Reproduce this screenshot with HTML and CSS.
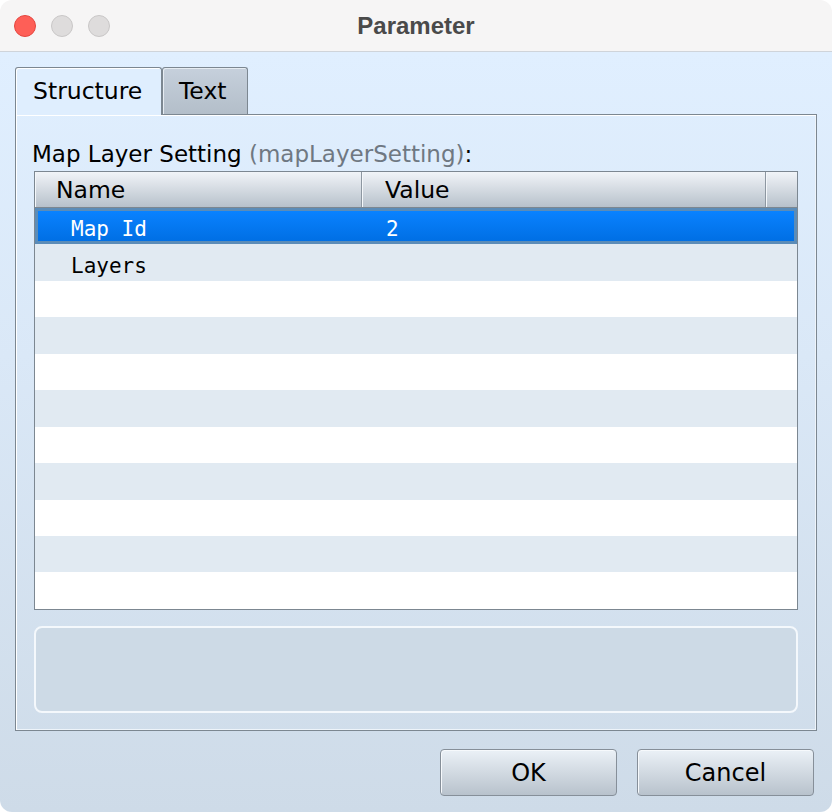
FILE: index.html
```html
<!DOCTYPE html>
<html>
<head>
<meta charset="utf-8">
<link rel="stylesheet" href="styles.css">
</head>
<body>
<div class="window">
  <div class="titlebar">
    <div class="lights">
      <span class="light red"></span>
      <span class="light gray"></span>
      <span class="light gray"></span>
    </div>
    <div class="title">Parameter</div>
  </div>
  <div class="content">
    <div class="tabs">
      <div class="tab active">Structure</div>
      <div class="tab">Text</div>
    </div>
    <div class="pane">
      <div class="label">Map Layer Setting <span class="key">(mapLayerSetting)</span>:</div>
      <div class="table">
        <div class="thead">
          <div class="th col-name">Name</div>
          <div class="th col-value">Value</div>
          <div class="th col-end"></div>
        </div>
        <div class="tbody">
          <div class="row selected"><div class="cell col-name">Map Id</div><div class="cell col-value">2</div></div>
          <div class="row alt"><div class="cell col-name">Layers</div><div class="cell col-value"></div></div>
          <div class="row"></div>
          <div class="row alt"></div>
          <div class="row"></div>
          <div class="row alt"></div>
          <div class="row"></div>
          <div class="row alt"></div>
          <div class="row"></div>
          <div class="row alt"></div>
          <div class="row"></div>
        </div>
      </div>
      <div class="desc"></div>
    </div>
    <div class="buttons">
      <button class="btn">OK</button>
      <button class="btn">Cancel</button>
    </div>
  </div>
</div>
</body>
</html>
```

FILE: styles.css
```css
html, body {
  margin: 0;
  padding: 0;
  background: #ffffff;
}
.window {
  width: 832px;
  height: 812px;
  border-radius: 12px;
  overflow: hidden;
  display: flex;
  flex-direction: column;
  font-family: "DejaVu Sans", sans-serif;
  color: #000;
}
.titlebar {
  height: 51px;
  flex: none;
  background: #f6f5f5;
  border-bottom: 1px solid #cfd4da;
  display: flex;
  align-items: center;
  position: relative;
}
.lights {
  display: flex;
  gap: 15px;
  padding-left: 14px;
}
.light {
  width: 22px;
  height: 22px;
  border-radius: 50%;
  box-sizing: border-box;
}
.light.red {
  background: #fe5f57;
  border: 1px solid #e5463f;
}
.light.gray {
  background: #dedcdc;
  border: 1px solid #c9c7c7;
}
.title {
  position: absolute;
  left: 0;
  right: 0;
  text-align: center;
  font-family: "Liberation Sans", "DejaVu Sans", sans-serif;
  font-weight: bold;
  font-size: 24px;
  color: #4a4a4a;
  pointer-events: none;
}
.content {
  flex: 1;
  background: linear-gradient(to bottom, #e0efff 0%, #dae8f7 40%, #cedbe8 100%);
  padding: 15px 15px 0 15px;
  display: flex;
  flex-direction: column;
}
.tabs {
  display: flex;
  align-items: flex-end;
  height: 48px;
  position: relative;
  z-index: 2;
  margin-bottom: -1px;
}
.tab {
  box-sizing: border-box;
  height: 47px;
  font-size: 23.5px;
  line-height: 47px;
  border: 1px solid #7c8791;
  border-bottom: none;
  border-radius: 3px 3px 0 0;
  background: linear-gradient(to bottom, #c6d0dc, #b3bec9);
  box-shadow: inset 1px 1px 0 #e6ecf2;
}
.tab.active {
  height: 48px;
  width: 147px;
  padding: 0 0 0 17px;
  background: #dfeefe;
  box-shadow: inset 1px 1px 0 #ffffff;
}
.tab:not(.active) {
  width: 86px;
  padding-left: 16px;
  margin-bottom: 1px;
}
.pane {
  box-sizing: border-box;
  height: 617px;
  border: 1px solid #7c8791;
  box-shadow: inset 1px 1px 0 #ffffff, inset -1px -1px 0 #eef4fa;
  padding: 0 18px 0 18px;
  display: flex;
  flex-direction: column;
  width: 802px;
}
.label {
  font-size: 23px;
  margin-top: 24px;
  margin-left: -2px;
  height: 32px;
  line-height: 30px;
}
.key {
  color: #6f7882;
}
.table {
  box-sizing: border-box;
  width: 764px;
  height: 439px;
  border: 1px solid #7c8791;
  background: #ffffff;
  display: flex;
  flex-direction: column;
}
.thead {
  display: flex;
  height: 36px;
  flex: none;
  box-sizing: border-box;
  border-bottom: 1px solid #7c8791;
}
.th {
  box-sizing: border-box;
  background: linear-gradient(to bottom, #f1f4f8, #b7c1cb);
  font-size: 23.5px;
  line-height: 37px;
  border-right: 1px solid #8d97a1;
  box-shadow: inset 1px 0 0 #f4f7fa;
}
.th.col-name {
  width: 327px;
  padding-left: 21px;
}
.th.col-value {
  width: 404px;
  padding-left: 23px;
}
.th.col-end {
  flex: 1;
  border-right: none;
}
.tbody {
  flex: 1;
  display: flex;
  flex-direction: column;
}
.row {
  height: 36.45px;
  box-sizing: border-box;
  display: flex;
  background: #ffffff;
  font-family: "DejaVu Sans Mono", monospace;
  font-size: 21px;
}
.row.alt {
  background: #e1eaf2;
}
.row.selected {
  border: 3px solid #5b8cb8;
  background: linear-gradient(to bottom, #0a82ff, #006fe4);
  color: #ffffff;
}
.cell {
  line-height: 36px;
  padding-top: 4px;
}
.row.selected .cell {
  line-height: 30px;
  padding-top: 3px;
}
.cell.col-name {
  width: 327px;
  padding-left: 36px;
  box-sizing: border-box;
}
.row.selected .cell.col-name {
  width: 324px;
  padding-left: 33px;
}
.cell.col-value {
  padding-left: 24px;
}
.desc {
  box-sizing: border-box;
  margin-top: 16px;
  width: 764px;
  height: 87px;
  border: 2px solid #f4f8fc;
  border-radius: 8px;
  background: #cddae6;
}
.buttons {
  display: flex;
  justify-content: flex-end;
  gap: 20px;
  padding-top: 18px;
  padding-right: 3px;
}
.btn {
  box-sizing: border-box;
  width: 177px;
  height: 47px;
  border: 1px solid #868f99;
  border-radius: 4px;
  background: linear-gradient(to bottom, #ebf1f7, #b8c2cc);
  box-shadow: inset 1px 1px 0 #f6f9fc;
  font-family: "DejaVu Sans", sans-serif;
  font-size: 24px;
  color: #000;
  padding: 0;
}
```
